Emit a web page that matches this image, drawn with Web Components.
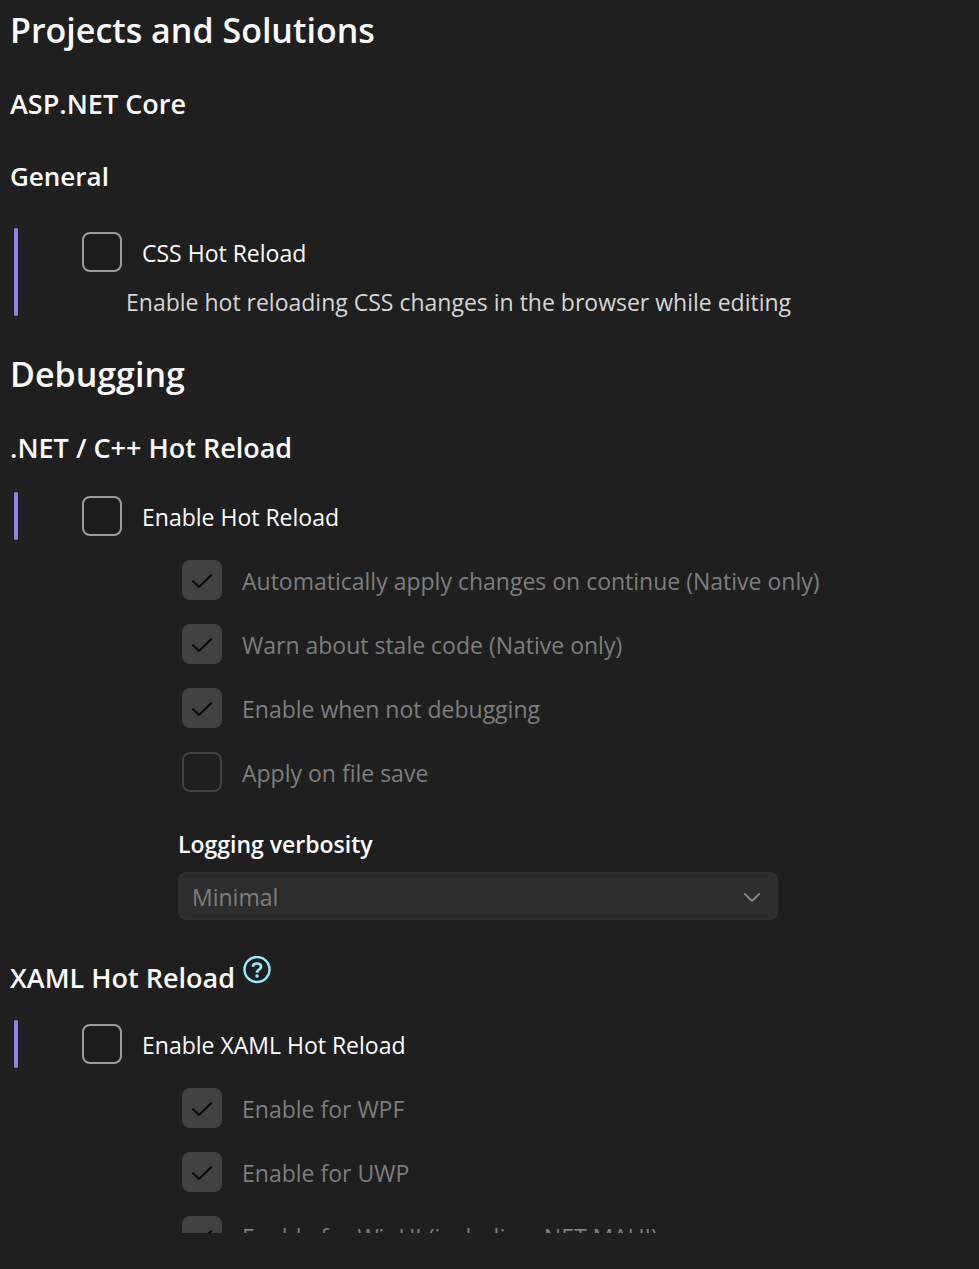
<!DOCTYPE html>
<html lang="en">
<head>
<meta charset="utf-8">
<meta name="viewport" content="width=device-width, initial-scale=1">
<title>Projects and Solutions</title>
<style>
  html, body { margin: 0; height: 100%; background: #1f1f1f; }
  body { color: #fff; font-family: "Open Sans", "Noto Sans", sans-serif; font-size: 23px; }
</style>
</head>
<body>
<settings-pane>
  <settings-heading level="1">Projects and Solutions</settings-heading>
  <settings-heading level="2">ASP.NET Core</settings-heading>
  <settings-heading level="3">General</settings-heading>
  <settings-group>
    <setting-check label="CSS Hot Reload" note="Enable hot reloading CSS changes in the browser while editing"></setting-check>
  </settings-group>

  <settings-heading level="1">Debugging</settings-heading>
  <settings-heading level="2">.NET / C++ Hot Reload</settings-heading>
  <settings-group>
    <setting-check label="Enable Hot Reload"></setting-check>
    <setting-check slot="children" label="Automatically apply changes on continue (Native only)" checked disabled></setting-check>
    <setting-check slot="children" label="Warn about stale code (Native only)" checked disabled></setting-check>
    <setting-check slot="children" label="Enable when not debugging" checked disabled></setting-check>
    <setting-check slot="children" label="Apply on file save" disabled></setting-check>
    <setting-select slot="children" label="Logging verbosity" value="Minimal" disabled></setting-select>
  </settings-group>

  <settings-heading level="2" help>XAML Hot Reload<help-link slot="after"></help-link></settings-heading>
  <settings-group>
    <setting-check label="Enable XAML Hot Reload"></setting-check>
    <setting-check slot="children" label="Enable for WPF" checked disabled></setting-check>
    <setting-check slot="children" label="Enable for UWP" checked disabled></setting-check>
    <setting-check slot="children" label="Enable for WinUI (including .NET MAUI)" checked disabled></setting-check>
  </settings-group>
</settings-pane>

<script>
class SettingsPane extends HTMLElement {
  constructor() {
    super();
    this.attachShadow({ mode: 'open' }).innerHTML = `
      <style>
        :host { display: block; box-sizing: border-box; height: 100vh; padding-bottom: 36px; }
        main { box-sizing: border-box; height: 100%; overflow: hidden; padding: 8px 10px 0; }
      </style>
      <main><slot></slot></main>`;
  }
}

class SettingsHeading extends HTMLElement {
  constructor() {
    super();
    const level = this.getAttribute('level') || '2';
    this.attachShadow({ mode: 'open' }).innerHTML = `
      <style>
        :host { display: flex; align-items: center; gap: 8px; }
        :host([level="1"]) { margin-bottom: 32px; }
        :host([level="2"]) { margin-bottom: 24px; }
        :host([level="3"]) { margin: 32px 0; }
        :host([help]) { margin-bottom: 20px; }
        h1, h2, h3 { margin: 0; font-weight: 600; font-size: 27px; line-height: 40px; color: #fafafa; }
        h1 { font-size: 34px; line-height: 44px; }
        h3 { font-size: 26px; }
        :host([help]) h2 { line-height: 44px; }
      </style>
      <h${level}><slot></slot></h${level}><slot name="after"></slot>`;
  }
}

class SettingsGroup extends HTMLElement {
  constructor() {
    super();
    this.attachShadow({ mode: 'open' }).innerHTML = `
      <style>
        :host { display: block; margin-bottom: 36px; }
        .main { margin-left: 4px; padding-left: 64px; position: relative; }
        .main::before { content: ""; position: absolute; inset: 0 auto 0 0; width: 4px; border-radius: 2px; background: #9184ee; }
        .children { display: flex; flex-direction: column; gap: 16px; padding-left: 168px; }
        .children.filled { margin-top: 16px; }
      </style>
      <div class="main"><slot></slot></div>
      <div class="children"><slot name="children"></slot></div>`;
    const box = this.shadowRoot.querySelector('.children');
    box.classList.toggle('filled', !!this.querySelector('[slot="children"]'));
  }
}

class SettingCheck extends HTMLElement {
  constructor() {
    super();
    const on = this.hasAttribute('checked') ? 'checked' : '';
    const off = this.hasAttribute('disabled') ? 'disabled' : '';
    const note = this.getAttribute('note');
    this.attachShadow({ mode: 'open' }).innerHTML = `
      <style>
        :host { display: block; padding-left: 4px; }
        .row { display: flex; align-items: center; gap: 20px; min-height: 48px; }
        .box { display: grid; flex: none; width: 40px; height: 40px; }
        input, svg { grid-area: 1 / 1; }
        input { appearance: none; box-sizing: border-box; margin: 0; width: 40px; height: 40px;
                border: 2px solid #9d9d9d; border-radius: 8px; background: #1c1c1c; }
        input:disabled { border-color: #424242; background: #1f1f1f; }
        input:disabled:checked { background: #424242; }
        svg { display: none; pointer-events: none; }
        input:checked + svg { display: block; }
        label { padding-top: 2px; line-height: 32px; }
        input:disabled { cursor: default; }
        :host([disabled]) label { color: #7e7e7e; }
        p { margin: 0; padding: 12px 0 0 44px; line-height: 28px; color: #d6d6d6; }
      </style>
      <div class="row">
        <span class="box">
          <input type="checkbox" id="c" ${on} ${off}>
          <svg width="40" height="40" viewBox="0 0 40 40" fill="none" stroke="#080808" stroke-width="2" stroke-linecap="round" stroke-linejoin="round" aria-hidden="true"><path d="M11 21.2 17 27 29.2 15"/></svg>
        </span>
        <label for="c"></label>
      </div>
      ${note ? '<p></p>' : ''}`;
    this.shadowRoot.querySelector('label').textContent = this.getAttribute('label');
    if (note) this.shadowRoot.querySelector('p').textContent = note;
  }
}

class SettingSelect extends HTMLElement {
  constructor() {
    super();
    this.attachShadow({ mode: 'open' }).innerHTML = `
      <style>
        :host { display: block; margin-top: 16px; max-width: 600px; }
        label { display: block; font-weight: 600; font-size: 23px; line-height: 32px; margin-bottom: 12px; }
        .field { display: grid; align-items: center; }
        select, svg { grid-area: 1 / 1; }
        select { appearance: none; box-sizing: border-box; width: 100%; height: 48px; margin: 0; padding: 2px 12px 0;
                 border: 2px solid #303030; border-radius: 8px; background: #2d2d2d; color: #7e7e7e;
                 font: inherit; opacity: 1; }
        svg { justify-self: end; margin-right: 16px; pointer-events: none; }
      </style>
      <label for="s"></label>
      <div class="field">
        <select id="s" ${this.hasAttribute('disabled') ? 'disabled' : ''}><option></option></select>
        <svg width="20" height="20" viewBox="0 0 20 20" fill="none" stroke="#8a8a8a" stroke-width="1.8" stroke-linecap="round" stroke-linejoin="round" aria-hidden="true"><path d="M2.8 7.8 10 15 17.2 7.8"/></svg>
      </div>`;
    this.shadowRoot.querySelector('label').textContent = this.getAttribute('label');
    this.shadowRoot.querySelector('option').textContent = this.getAttribute('value');
  }
}

class HelpLink extends HTMLElement {
  constructor() {
    super();
    this.attachShadow({ mode: 'open' }).innerHTML = `
      <style>
        :host { display: block; align-self: flex-start; height: 28px; }
        a, svg { display: block; }
        a { color: #99ebff; }
      </style>
      <a href="#help" aria-label="Help">
        <svg width="28" height="28" viewBox="0 0 28 28" fill="none" stroke="currentColor" stroke-width="2.7" stroke-linejoin="round" aria-hidden="true">
          <circle cx="14" cy="13.5" r="12.5" stroke-width="2.4"/>
          <path d="M10 10.8C10 8.7 11.7 7.5 14 7.5s4 1.3 4 3.3c0 2.8-4 3-4 6"/>
          <circle cx="14" cy="20" r="1.8" fill="currentColor" stroke="none"/>
        </svg>
      </a>`;
  }
}

customElements.define('settings-pane', SettingsPane);
customElements.define('settings-heading', SettingsHeading);
customElements.define('settings-group', SettingsGroup);
customElements.define('setting-check', SettingCheck);
customElements.define('setting-select', SettingSelect);
customElements.define('help-link', HelpLink);
</script>
</body>
</html>
